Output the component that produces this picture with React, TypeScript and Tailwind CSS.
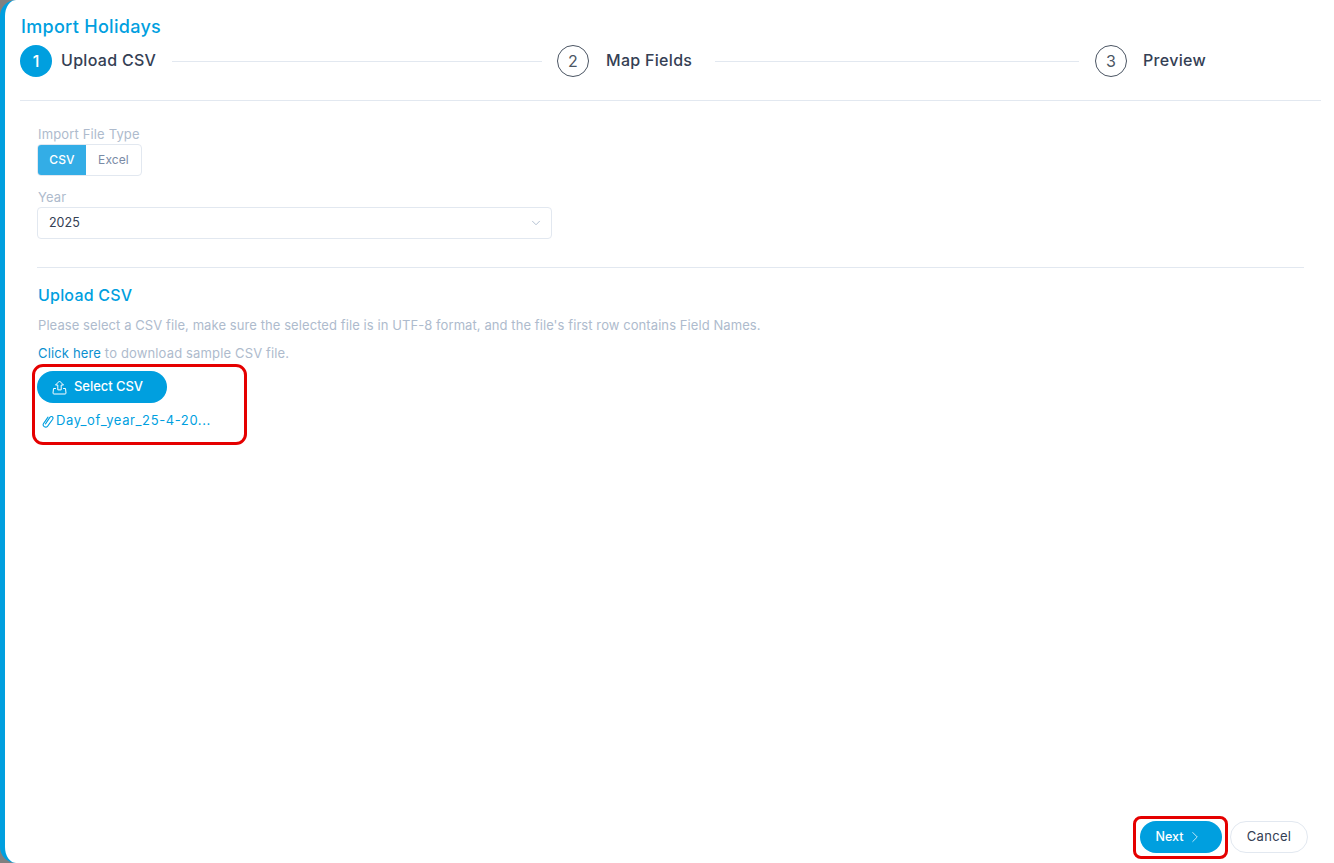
import { ChevronDown, ChevronRight } from "lucide-react";

const font = { fontFamily: "Inter, 'Noto Sans', sans-serif" };

function Step({ n, label, active, labelW, line, gap }: { n: string; label: string; active?: boolean; labelW: string; line?: boolean; gap: string }) {
  return (
    <div className={line ? "flex flex-1 items-center" : "flex items-center"}>
      <div className={active ? "flex h-8 w-8 shrink-0 items-center justify-center rounded-full bg-[#009fdf] text-base font-medium text-white" : "flex h-8 w-8 shrink-0 items-center justify-center rounded-full border border-[#4b5563] text-base text-[#4b5563]"}>
        {n}
      </div>
      <div className={`-mt-[2px] whitespace-nowrap text-base font-medium tracking-[0.3px] text-[#344054] ${gap} ${labelW}`}>{label}</div>
      {line && <div className="mx-4 h-px flex-1 bg-[#e2e8f0]" />}
    </div>
  );
}

export default function App() {
  return (
    <div style={font} className="h-[863px] w-[1334px] overflow-hidden bg-[#808080]">
      <div className="flex h-full flex-col rounded-l-2xl border-l-[5px] border-[#009fdf] bg-white">
        <div className="flex flex-col pl-[15px] pr-[13px]">
          <h1 className="mt-[15px] h-[24px] pl-px text-lg leading-[24px] font-medium tracking-[0.3px] text-[#009fdf]">Import Holidays</h1>
          <div className="mt-[6px] flex h-8 items-center">
            <Step n="1" label="Upload CSV" active line labelW="w-[95px]" gap="ml-[9px]" />
            <div className="-ml-px flex flex-1"><Step n="2" label="Map Fields" line labelW="w-[93px]" gap="ml-[17px]" /></div>
            <div className="w-[226px]"><Step n="3" label="Preview" labelW="w-[62px]" gap="ml-4" /></div>
          </div>
          <div className="mt-[23px] h-px bg-[#e2e8f0]" />
        </div>

        <div className="flex flex-1 flex-col pl-8 pr-[30px]">
          <label className="mt-[24px] block h-[19px] pl-px text-[13px] leading-[18px] tracking-[0.15px] text-[#aebbcd]">Import File Type</label>
          <div className="flex h-8 w-[105px] overflow-hidden rounded border border-[#e2e8f0] text-xs font-medium">
            <div className="flex w-[48px] items-center justify-center bg-[#33ade6] tracking-[0.1px] text-white">CSV</div>
            <div className="flex flex-1 items-center justify-center font-normal tracking-[0.1px] text-[#7a8ba6]">Excel</div>
          </div>
          <label className="mt-[12px] block h-[19px] pl-px text-[13px] leading-[19px] tracking-[0.15px] text-[#aebbcd]">Year</label>
          <div className="flex h-8 w-[515px] items-center justify-between rounded border border-[#e2e8f0] pl-[11px] pr-[8px] text-[12.5px] text-[#344054]">
            <span>2025</span>
            <ChevronDown className="h-[14px] w-[14px] text-[#a9b8cc]" strokeWidth={1.5} />
          </div>
          <div className="mt-7 h-px bg-[#e2e8f0]" />
          <h2 className="mt-[17px] h-[20px] pl-px text-base leading-[20px] font-medium tracking-[0.2px] text-[#009fdf]">Upload CSV</h2>
          <p className="mt-[11px] h-[18px] pl-px text-[13px] leading-[18px] tracking-[0.08px] text-[#aebbcd]">
            Please select a CSV file, make sure the selected file is in UTF-8 format, and the file's first row contains Field Names.
          </p>
          <p className="mt-[10px] h-[18px] pl-px text-[13px] leading-[18px] tracking-[0.15px] text-[#aebbcd]">
            <span className="text-[#0b8fcf]">Click here</span> to download sample CSV file.
          </p>
          <div className="relative mt-[9px] w-[206px]">
            <div className="flex h-8 w-[130px] items-center rounded-full bg-[#009fdf] pl-[15px] text-[13px] font-medium text-white">
              <svg width="15" height="15" viewBox="0 0 15 15" fill="none" stroke="currentColor" strokeWidth="1" strokeLinejoin="round" strokeLinecap="round">
                <path d="M5.8 9.5V5H3.5L7.5 1L11.5 5H9.2V9.5Z" />
                <path d="M3.5 8.5H1.5L1 13C1 13.7 1.4 14 1.8 14H13.2C13.6 14 14 13.7 14 13L13.5 8.5H11.5" />
              </svg>
              <span className="ml-[7px] tracking-[-0.05px]">Select CSV</span>
            </div>
            <div className="mt-[10px] flex h-4 items-center text-[13px] tracking-[0.6px] text-[#009fdf]">
              <svg className="ml-[5px] mr-[2px]" width="12" height="13" viewBox="0 0 11 12" fill="none" stroke="currentColor" strokeWidth="1" strokeLinecap="round">
                <path d="M3.2 8.2L7.2 2.2C7.8 1.3 8.8 1.1 9.5 1.6C10.2 2.1 10.3 3 9.8 3.9L5.2 10.2C4.4 11.2 3 11.4 2 10.7C1 10 0.8 8.7 1.5 7.7L5.5 2" />
              </svg>
              <span>Day_of_year_25-4-20...</span>
            </div>
            <div className="absolute top-[-7px] left-[-5px] h-[81px] w-[215px] rounded-[11px] border-[3px] border-[#e50000]" />
          </div>

          <div className="-mr-1 mt-auto mb-[10px] flex justify-end gap-2 pt-4">
            <div className="relative">
              <div className="flex h-8 w-[82px] items-center justify-center rounded-full bg-[#009fdf] pr-[2px] text-[12.5px] font-medium text-white">
                Next
                <ChevronRight className="ml-[3px] h-[18px] w-[18px]" strokeWidth={1} />
              </div>
              <div className="absolute top-[-5px] left-[-7px] h-[43px] w-[95px] rounded-[8px] border-[3px] border-[#e50000]" />
            </div>
            <div className="flex h-8 w-[78px] items-center justify-center rounded-full border border-[#e2e8f0] text-[13px] tracking-[0.3px] text-[#344054]">Cancel</div>
          </div>
        </div>
      </div>
    </div>
  );
}
